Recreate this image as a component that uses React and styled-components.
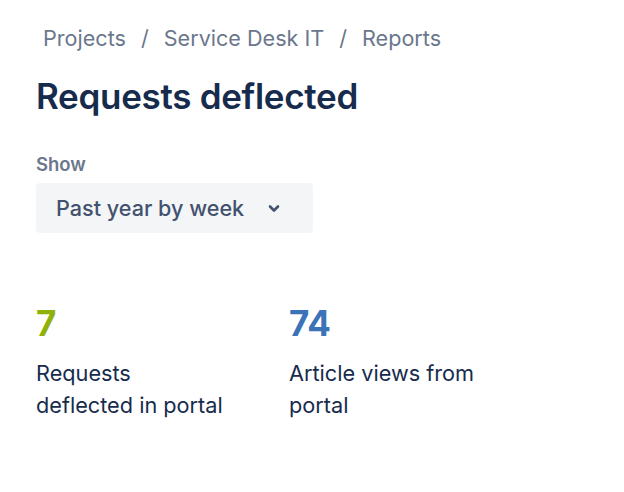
import React from "react";
import styled, { createGlobalStyle } from "styled-components";

const Global = createGlobalStyle`
  html, body { margin: 0; padding: 0; background: #fff; }
  body { font-family: Inter, "Noto Sans", "Liberation Sans", sans-serif; -webkit-font-smoothing: antialiased; }
`;

const Page = styled.div`
  padding: 24px 36px;
  display: flex;
  flex-direction: column;
`;

const Breadcrumbs = styled.nav`
  display: flex;
  align-items: center;
  gap: 15px;
  padding-left: 7px;
  font-size: 21.6px;
  line-height: 28px;
  color: #6b778c;
`;

const Crumb = styled.span``;
const Sep = styled.span`
  color: #6b778c;
`;

const Title = styled.h1`
  margin: 24px 0 0;
  font-size: 35px;
  line-height: 40px;
  font-weight: 600;
  color: #172b4d;
  letter-spacing: -0.3px;
`;

const Label = styled.div`
  margin-top: 38px;
  font-size: 18.5px;
  line-height: 20px;
  font-weight: 600;
  color: #6b778c;
`;

const Select = styled.button`
  margin-top: 9px;
  width: 277px;
  height: 50px;
  border: none;
  border-radius: 4px;
  background: #f4f5f7;
  display: flex;
  align-items: center;
  padding: 0 0 0 20px;
  gap: 22px;
  font-family: inherit;
  font-size: 21.6px;
  font-weight: 500;
  color: #42526e;
  cursor: pointer;
`;

const Stats = styled.div`
  margin-top: 70px;
  display: grid;
  grid-template-columns: 253px 220px;
`;

const Stat = styled.div`
  display: flex;
  flex-direction: column;
`;

const Value = styled.div`
  font-size: 35px;
  line-height: 40px;
  font-weight: 700;
  color: ${(p) => p.$color};
`;

const Desc = styled.div`
  margin-top: 14px;
  font-size: 21.7px;
  line-height: 32px;
  color: #172b4d;
`;

export default function App() {
  return (
    <>
      <Global />
      <Page>
        <Breadcrumbs>
          <Crumb>Projects</Crumb>
          <Sep>/</Sep>
          <Crumb>Service Desk IT</Crumb>
          <Sep>/</Sep>
          <Crumb>Reports</Crumb>
        </Breadcrumbs>
        <Title>Requests deflected</Title>
        <Label>Show</Label>
        <Select>
          Past year by week
          <svg width="16" height="16" viewBox="0 0 16 16">
            <path d="M4 6.5l4 4 4-4" fill="none" stroke="#42526e" strokeWidth="2.6" strokeLinecap="round" strokeLinejoin="round" />
          </svg>
        </Select>
        <Stats>
          <Stat>
            <Value $color="#8fb10a">7</Value>
            <Desc>Requests<br />deflected in portal</Desc>
          </Stat>
          <Stat>
            <Value $color="#3b73b8">74</Value>
            <Desc>Article views from<br />portal</Desc>
          </Stat>
        </Stats>
      </Page>
    </>
  );
}
